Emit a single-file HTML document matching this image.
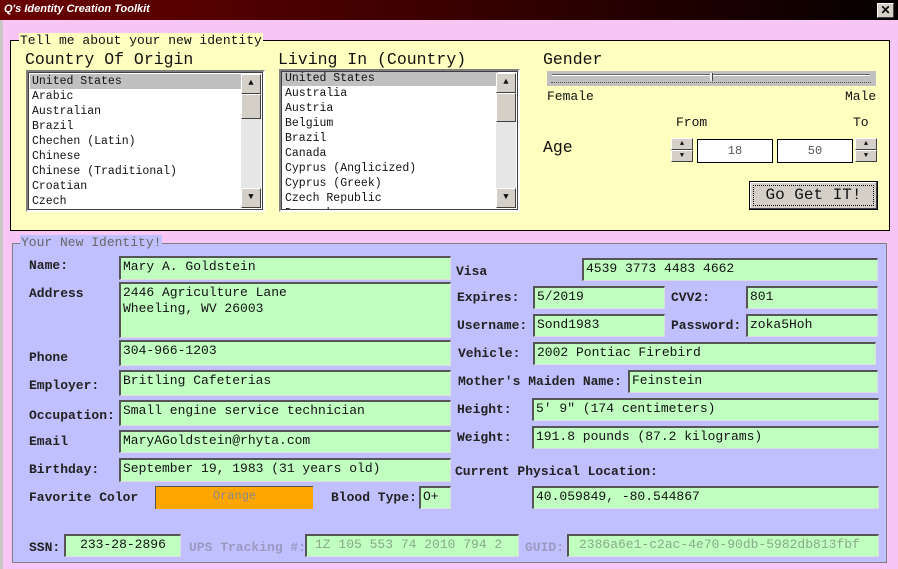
<!DOCTYPE html>
<html><head><style>
*{margin:0;padding:0;box-sizing:border-box}
body{width:898px;height:569px;background:#f7c6f5;font-family:"Liberation Mono",monospace;position:relative;overflow:hidden;color:#111}
.a{position:absolute;white-space:pre}
.tb{left:0;top:0;width:898px;height:20px;background:linear-gradient(90deg,#6a0000,#3a0000 50%,#050000);color:#fff;font:bold italic 11px "Liberation Sans",sans-serif;padding:3px 4px}
.cl{left:877px;top:3px;width:17px;height:15px;background:#d4d0c8;border:1px solid;border-color:#fff #404040 #404040 #fff;font:bold 12px "Liberation Sans",sans-serif;text-align:center;line-height:12px;color:#000}
.yp{left:10px;top:40px;width:880px;height:191px;background:#ffffc0;border:1px solid #000}
.bp{left:12px;top:243px;width:875px;height:320px;background:#c0c0ff;border:1px solid #808080}
.lg{font-size:13px;padding:0 1px}
.h{font-size:16.5px}
.lb{background:#fff;border:2px solid;border-color:#808080 #fff #fff #808080;outline:1px solid #404040;outline-offset:-3px;font-size:11.5px;overflow:hidden;white-space:normal}
.lb .it{height:15px;line-height:15px;padding-left:4px;white-space:pre}
.sb{position:absolute;top:2px;right:2px;width:20px;bottom:2px;background:#e6e6e6}
.btn{position:absolute;background:#d4d0c8;border:1px solid;border-color:#fff #404040 #404040 #fff}
.f{background:#c0ffc0;border-top:2px solid #555;border-left:2px solid #555;border-right:1px solid #ddd;border-bottom:1px solid #ddd;font-size:13px;padding:1px 2px;line-height:16px}
.l{font-size:13px;font-weight:bold;color:#222}
</style></head><body>
<div class="a tb">Q's Identity Creation Toolkit</div>
<div class="a cl">✕</div>
<div class="a" style="left:0;top:20px;width:3px;height:549px;background:#c8c8c8"></div>
<div class="a yp"></div>
<div class="a lg" style="left:19px;top:33px;background:#ffffc0">Tell me about your new identity</div>
<div class="a h" style="left:25px;top:50px">Country Of Origin</div>
<div class="a h" style="left:278px;top:50px">Living In (Country)</div>
<div class="a lb" style="left:26px;top:70px;width:239px;height:142px"><div class="it" style="background:#c0c0c0;margin:2px 20px 0 2px;padding-left:2px">United States</div><div class="it">Arabic</div><div class="it">Australian</div><div class="it">Brazil</div><div class="it">Chechen (Latin)</div><div class="it">Chinese</div><div class="it">Chinese (Traditional)</div><div class="it">Croatian</div><div class="it">Czech</div><div class="sb"><div class="btn" style="top:0;left:0;width:20px;height:20px;font-size:9px;text-align:center;line-height:17px">▲</div><div class="btn" style="top:20px;left:0;width:20px;height:25px"></div><div class="btn" style="bottom:0;left:0;width:20px;height:20px;font-size:9px;text-align:center;line-height:17px">▼</div></div></div>
<div class="a lb" style="left:279px;top:69px;width:241px;height:143px"><div class="it" style="background:#c0c0c0;margin:0 20px 0 0">United States</div><div class="it">Australia</div><div class="it">Austria</div><div class="it">Belgium</div><div class="it">Brazil</div><div class="it">Canada</div><div class="it">Cyprus (Anglicized)</div><div class="it">Cyprus (Greek)</div><div class="it">Czech Republic</div><div class="it">Denmark</div><div class="sb"><div class="btn" style="top:0;left:0;width:20px;height:20px;font-size:9px;text-align:center;line-height:17px">▲</div><div class="btn" style="top:20px;left:0;width:20px;height:29px"></div><div class="btn" style="bottom:0;left:0;width:20px;height:20px;font-size:9px;text-align:center;line-height:17px">▼</div></div></div>
<div class="a h" style="left:543px;top:50px">Gender</div>
<div class="a" style="left:547px;top:71px;width:329px;height:15px;background:#c0c0c0"></div>
<div class="a" style="left:552px;top:74px;width:318px;height:2px;border-top:1px solid #666;border-bottom:1px solid #fff"></div>
<div class="a" style="left:551px;top:82px;width:320px;height:2px;border-top:1px dotted #555"></div>
<div class="a" style="left:710px;top:73px;width:3px;height:8px;background:#eee;border-right:1px solid #444"></div>
<div class="a" style="left:547px;top:89px;font-size:13px">Female</div>
<div class="a" style="left:845px;top:89px;font-size:13px">Male</div>
<div class="a" style="left:676px;top:115px;font-size:13px">From</div>
<div class="a" style="left:853px;top:115px;font-size:13px">To</div>
<div class="a h" style="left:543px;top:138px">Age</div>
<div class="btn" style="left:671px;top:138px;width:22px;height:12px;font-size:7px;text-align:center;line-height:10px">▲</div>
<div class="btn" style="left:671px;top:150px;width:22px;height:12px;font-size:7px;text-align:center;line-height:10px">▼</div>
<div class="a" style="left:697px;top:139px;width:76px;height:24px;background:#fff;border:1px solid #000;font-size:12px;text-align:center;line-height:22px;color:#555">18</div>
<div class="a" style="left:777px;top:139px;width:76px;height:24px;background:#fff;border:1px solid #000;font-size:12px;text-align:center;line-height:22px;color:#555">50</div>
<div class="btn" style="left:855px;top:138px;width:22px;height:12px;font-size:7px;text-align:center;line-height:10px">▲</div>
<div class="btn" style="left:855px;top:150px;width:22px;height:12px;font-size:7px;text-align:center;line-height:10px">▼</div>
<div class="a" style="left:749px;top:181px;width:129px;height:29px;background:#d4d0c8;border:1px solid #000;box-shadow:inset -1px -1px #404040,inset 1px 1px #fff;white-space:normal"><div style="margin:3px;border:1px dotted #000;height:21px;text-align:center;font-size:16px;line-height:19px">Go Get IT!</div></div>

<div class="a bp"></div>
<div class="a lg" style="left:20px;top:235px;background:#c0c0ff;color:#666">Your New Identity!</div>

<div class="a l" style="left:29px;top:258px">Name:</div>
<div class="a f" style="left:119px;top:256px;width:332px;height:24px">Mary A. Goldstein</div>
<div class="a l" style="left:29px;top:286px">Address</div>
<div class="a f" style="left:119px;top:282px;width:332px;height:56px;line-height:16px">2446 Agriculture Lane
Wheeling, WV 26003</div>
<div class="a l" style="left:29px;top:350px">Phone</div>
<div class="a f" style="left:119px;top:340px;width:332px;height:26px">304-966-1203</div>
<div class="a l" style="left:29px;top:378px">Employer:</div>
<div class="a f" style="left:119px;top:370px;width:332px;height:26px">Britling Cafeterias</div>
<div class="a l" style="left:29px;top:408px">Occupation:</div>
<div class="a f" style="left:119px;top:400px;width:332px;height:26px">Small engine service technician</div>
<div class="a l" style="left:29px;top:434px">Email</div>
<div class="a f" style="left:119px;top:430px;width:332px;height:23px">MaryAGoldstein@rhyta.com</div>
<div class="a l" style="left:29px;top:462px">Birthday:</div>
<div class="a f" style="left:119px;top:458px;width:332px;height:24px">September 19, 1983 (31 years old)</div>
<div class="a l" style="left:29px;top:490px">Favorite Color</div>
<div class="a" style="left:155px;top:486px;width:158px;height:23px;background:#ffa500;border-left:1px solid #555;border-top:1px solid #555;font-size:12px;text-align:center;line-height:19px;color:#888">Orange</div>
<div class="a l" style="left:331px;top:490px">Blood Type:</div>
<div class="a f" style="left:419px;top:486px;width:32px;height:23px">O+</div>
<div class="a l" style="left:29px;top:540px">SSN:</div>
<div class="a f" style="left:64px;top:534px;width:117px;height:23px;text-align:center">233-28-2896</div>
<div class="a l" style="left:189px;top:540px;color:#9a9ac0">UPS Tracking #:</div>
<div class="a f" style="left:305px;top:534px;width:214px;height:23px;color:#8a8;padding-left:8px">1Z 105 553 74 2010 794 2</div>

<div class="a l" style="left:456px;top:264px">Visa</div>
<div class="a f" style="left:582px;top:258px;width:296px;height:23px">4539 3773 4483 4662</div>
<div class="a l" style="left:457px;top:290px">Expires:</div>
<div class="a f" style="left:533px;top:286px;width:132px;height:23px">5/2019</div>
<div class="a l" style="left:671px;top:290px">CVV2:</div>
<div class="a f" style="left:746px;top:286px;width:132px;height:23px">801</div>
<div class="a l" style="left:457px;top:318px">Username:</div>
<div class="a f" style="left:533px;top:314px;width:132px;height:23px">Sond1983</div>
<div class="a l" style="left:671px;top:318px">Password:</div>
<div class="a f" style="left:746px;top:314px;width:132px;height:23px">zoka5Hoh</div>
<div class="a l" style="left:458px;top:346px">Vehicle:</div>
<div class="a f" style="left:533px;top:342px;width:343px;height:23px">2002 Pontiac Firebird</div>
<div class="a l" style="left:458px;top:374px">Mother's Maiden Name:</div>
<div class="a f" style="left:628px;top:370px;width:250px;height:23px">Feinstein</div>
<div class="a l" style="left:457px;top:402px">Height:</div>
<div class="a f" style="left:532px;top:398px;width:347px;height:23px">5' 9" (174 centimeters)</div>
<div class="a l" style="left:457px;top:430px">Weight:</div>
<div class="a f" style="left:532px;top:426px;width:347px;height:23px">191.8 pounds (87.2 kilograms)</div>
<div class="a l" style="left:455px;top:464px">Current Physical Location:</div>
<div class="a f" style="left:532px;top:486px;width:347px;height:23px">40.059849, -80.544867</div>
<div class="a l" style="left:525px;top:540px;color:#9a9ac0">GUID:</div>
<div class="a f" style="left:567px;top:534px;width:312px;height:23px;color:#8a8;padding-left:10px">2386a6e1-c2ac-4e70-90db-5982db813fbf</div>
</body></html>
